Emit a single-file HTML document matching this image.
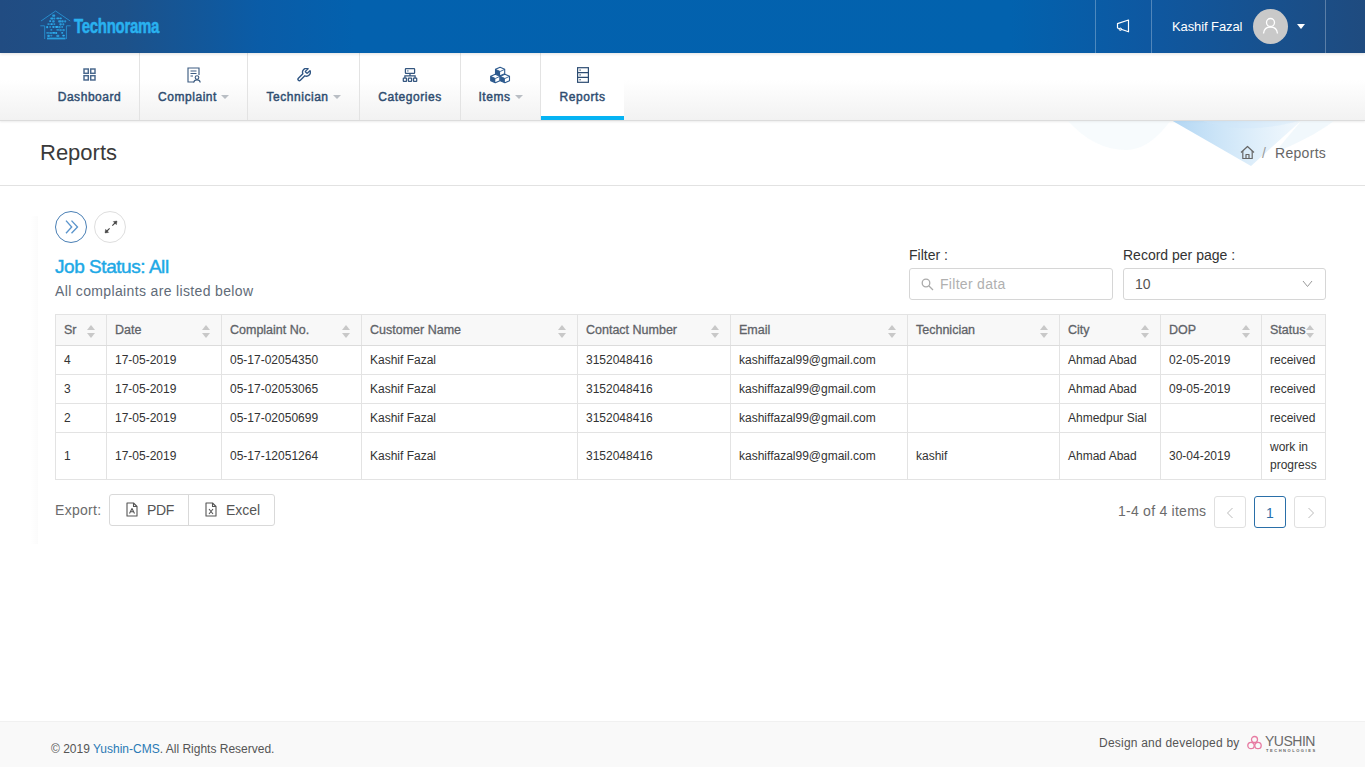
<!DOCTYPE html>
<html><head><meta charset="utf-8">
<style>
*{box-sizing:border-box;margin:0;padding:0}
html,body{width:1365px;height:767px;overflow:hidden;background:#fff;font-family:"Liberation Sans",sans-serif;color:#333}
.abs{position:absolute}
#hdr{position:absolute;left:0;top:0;width:1365px;height:53px;z-index:2;box-shadow:0 1px 3px rgba(0,0,0,.12);background:linear-gradient(90deg,#214c82 0%,#1d5189 9%,#0a5ca7 19%,#0361ae 26%,#0262ae 74%,#0e58a1 84%,#1f4b7f 100%)}
.vd{position:absolute;top:0;width:1px;height:53px;background:rgba(255,255,255,.28)}
#nav{position:absolute;left:0;top:53px;width:1365px;height:68px;background:linear-gradient(#fff 0%,#fff 40%,#f2f2f2 100%);border-bottom:1px solid #dcdcdc;box-shadow:0 1px 2px rgba(0,0,0,.08)}
.ni{position:absolute;top:0;height:67px;border-right:1px solid #e3e3e3;text-align:center}
.ni .lb{position:absolute;top:37px;left:0;right:0;font-size:12px;font-weight:normal;-webkit-text-stroke:.45px #2f4d70;color:#2f4d70;letter-spacing:.55px}
.ni svg{position:absolute}
.car{display:inline-block;width:0;height:0;border-left:4px solid transparent;border-right:4px solid transparent;border-top:4px solid #b9bec4;vertical-align:middle;margin-left:4px;margin-top:-2px}
#ptitle{position:absolute;left:0;top:121px;width:1365px;height:65px;border-bottom:1px solid #e2e2e2;overflow:hidden}
#card{position:absolute;left:30px;top:216px;width:8px;height:328px;background:linear-gradient(90deg,rgba(0,0,0,0),rgba(0,0,0,.016))}
.cbtn{position:absolute;width:32px;height:32px;border-radius:50%}
table{border-collapse:collapse;position:absolute;left:55px;top:314px;table-layout:fixed;font-size:12px}
td,th{border:1px solid #e3e3e3;padding:0 8px;text-align:left;vertical-align:middle;color:#333;font-weight:normal}
th{background:#f8f8f8;height:31px;font-size:12.5px;font-weight:normal;-webkit-text-stroke:.3px #5f6368;color:#5f6368;position:relative;border-bottom:1px solid #dcdcdc}
td{height:29px}
.srt{position:absolute;right:11px;top:10px;width:8px;height:13px}
.srt:before{content:"";position:absolute;left:0;top:0;border-left:4px solid transparent;border-right:4px solid transparent;border-bottom:5px solid #c8c8c8}
.srt:after{content:"";position:absolute;left:0;top:8px;border-left:4px solid transparent;border-right:4px solid transparent;border-top:5px solid #c8c8c8}
.inp{position:absolute;height:32px;border:1px solid #d6d6d6;border-radius:3px;background:#fff}
.pg{position:absolute;top:496px;width:32px;height:32px;border:1px solid #e0e0e0;border-radius:3px;text-align:center}
#foot{position:absolute;left:0;top:721px;width:1365px;height:46px;background:#f9f9f9;border-top:1px solid #f1f1f1}
</style></head>
<body>
<div id="hdr">
  <svg class="abs" style="left:40px;top:10px" width="31" height="31" viewBox="0 0 31 31">
    <g fill="none" stroke="#2aa3e6" stroke-width=".9" opacity=".8">
      <path d="M1 11 L15.6 1 L30.2 11"/><path d="M0.3 15.8 H4.5 M26.5 15.8 H30.6"/><path d="M4.7 15.8 V29 M26.4 15.8 V29"/>
    </g>
    <g fill="#2db4f5"><rect x="12.2" y="4.5" width="3" height="2.2" rx=".8" opacity="0.78"/><rect x="10.3" y="7.4" width="3" height="2.2" rx=".8" opacity="0.85"/><rect x="13.3" y="7.4" width="2" height="2.2" rx=".8" opacity="0.72"/><rect x="16.3" y="7.4" width="3" height="1.8" rx=".8" opacity="0.84"/><rect x="19.3" y="7.4" width="2.5" height="1.8" rx=".8" opacity="0.85"/><rect x="9.2" y="10.3" width="2" height="1.8" rx=".8" opacity="0.95"/><rect x="12.2" y="10.3" width="2.5" height="2.2" rx=".8" opacity="0.78"/><rect x="18.2" y="10.3" width="3" height="2.2" rx=".8" opacity="0.80"/><rect x="21.2" y="10.3" width="2.5" height="2.2" rx=".8" opacity="0.76"/><rect x="24.2" y="10.3" width="2" height="2.2" rx=".8" opacity="0.73"/><rect x="7.3" y="13.2" width="2.5" height="1.8" rx=".8" opacity="0.63"/><rect x="10.3" y="13.2" width="2.5" height="1.8" rx=".8" opacity="0.94"/><rect x="13.3" y="13.2" width="2" height="1.8" rx=".8" opacity="0.69"/><rect x="19.3" y="13.2" width="2.5" height="2.2" rx=".8" opacity="0.77"/><rect x="22.3" y="13.2" width="2" height="2.2" rx=".8" opacity="0.73"/><rect x="6.2" y="16.1" width="2" height="2.2" rx=".8" opacity="0.90"/><rect x="9.2" y="16.1" width="2" height="1.8" rx=".8" opacity="0.60"/><rect x="12.2" y="16.1" width="2.5" height="1.8" rx=".8" opacity="0.87"/><rect x="15.2" y="16.1" width="3" height="1.8" rx=".8" opacity="0.99"/><rect x="18.2" y="16.1" width="2.5" height="2.2" rx=".8" opacity="0.65"/><rect x="21.2" y="16.1" width="2" height="1.8" rx=".8" opacity="0.71"/><rect x="10.3" y="19.0" width="2" height="1.8" rx=".8" opacity="0.67"/><rect x="16.3" y="19.0" width="3" height="1.8" rx=".8" opacity="0.62"/><rect x="19.3" y="19.0" width="2.5" height="2.2" rx=".8" opacity="0.60"/><rect x="22.3" y="19.0" width="2.5" height="2.2" rx=".8" opacity="0.63"/><rect x="6.2" y="21.9" width="3" height="1.8" rx=".8" opacity="0.61"/><rect x="9.2" y="21.9" width="3" height="2.2" rx=".8" opacity="0.65"/><rect x="12.2" y="21.9" width="3" height="1.8" rx=".8" opacity="0.95"/><rect x="15.2" y="21.9" width="2" height="2.2" rx=".8" opacity="0.96"/><rect x="21.2" y="21.9" width="2" height="1.8" rx=".8" opacity="0.90"/><rect x="7.3" y="24.8" width="2.5" height="2.2" rx=".8" opacity="0.84"/><rect x="10.3" y="24.8" width="2" height="1.8" rx=".8" opacity="0.62"/><rect x="16.3" y="24.8" width="3" height="2.2" rx=".8" opacity="0.70"/><rect x="22.3" y="24.8" width="2.5" height="1.8" rx=".8" opacity="0.97"/><rect x="7" y="27.6" width="18.5" height="1.8" opacity=".8"/></g>
  </svg>
  <div class="abs" style="left:74px;top:15px;font-size:20px;font-weight:bold;color:#29b1ef;-webkit-text-stroke:.5px #29b1ef;transform:scaleX(.75);transform-origin:0 0;letter-spacing:-.4px">Technorama</div>
  <div class="vd" style="left:1095px"></div>
  <div class="vd" style="left:1151px"></div>
  <div class="vd" style="left:1325px"></div>
  <svg class="abs" style="left:1116px;top:19px" width="15" height="14" viewBox="0 0 15 14">
    <path d="M1.5 4.6 L12.5 1 V12.8 L1.5 9 Z" fill="none" stroke="#fff" stroke-width="1.2" stroke-linejoin="round"/><circle cx="4.4" cy="10.3" r="1.2" fill="none" stroke="#fff" stroke-width="1"/>
  </svg>
  <div class="abs" style="left:1172px;top:19px;font-size:13px;letter-spacing:-.1px;color:#fff">Kashif Fazal</div>
  <div class="abs" style="left:1253px;top:9px;width:35px;height:35px;border-radius:50%;background:#c9c9c9"></div>
  <svg class="abs" style="left:1261px;top:16px" width="19" height="19" viewBox="0 0 19 19">
    <circle cx="9.5" cy="6.5" r="4" fill="none" stroke="#fff" stroke-width="1.3"/>
    <path d="M2.5 17.5 C3 12.5 6 11 9.5 11 C13 11 16 12.5 16.5 17.5" fill="none" stroke="#fff" stroke-width="1.3"/>
  </svg>
  <div class="abs" style="left:1297px;top:24px;border-left:4.5px solid transparent;border-right:4.5px solid transparent;border-top:5px solid #fff"></div>
</div>

<div id="nav">
  <div class="ni" style="left:40px;width:100px">
    <svg style="left:43px;top:15px" width="13" height="13" viewBox="0 0 13 13"><g fill="none" stroke="#48678c" stroke-width="1.45"><rect x="1" y="1" width="4.3" height="4.3"/><rect x="7.7" y="1" width="4.3" height="4.3"/><rect x="1" y="7.7" width="4.3" height="4.3"/><rect x="7.7" y="7.7" width="4.3" height="4.3"/></g></svg>
    <div class="lb">Dashboard</div></div>
  <div class="ni" style="left:140px;width:108px">
    <svg style="left:47px;top:14px" width="14" height="16" viewBox="0 0 14 16"><g fill="none" stroke="#3e5d82" stroke-width="1.15"><path d="M7 15 H1 V1 H12 V8"/><path d="M3.5 4 H9.5 M3.5 6.5 H9.5 M3.5 9 H6"/><circle cx="10" cy="10.5" r="1.8"/><path d="M6.8 15.5 C7 13.5 8.5 12.8 10 12.8 C11.5 12.8 13 13.5 13.2 15.5"/></g></svg>
    <div class="lb">Complaint<span class="car"></span></div></div>
  <div class="ni" style="left:248px;width:112px">
    <svg style="left:49px;top:15px" width="14" height="14" viewBox="1.5 1.5 21.5 21.5"><path d="M14.7 6.3a1 1 0 0 0 0 1.4l1.6 1.6a1 1 0 0 0 1.4 0l3.77-3.77a6 6 0 0 1-7.94 7.94l-6.91 6.91a2.12 2.12 0 0 1-3-3l6.91-6.91a6 6 0 0 1 7.94-7.94l-3.76 3.76z" fill="none" stroke="#2f5583" stroke-width="2.1" stroke-linejoin="round"/></svg>
    <div class="lb">Technician<span class="car"></span></div></div>
  <div class="ni" style="left:360px;width:101px">
    <svg style="left:42px;top:14px" width="17" height="16" viewBox="0 0 17 16"><g fill="none" stroke="#34567f" stroke-width="1.25"><rect x="3.4" y="1.7" width="9.2" height="4.6" rx=".6"/><path d="M8 6.3 V8.9 M2.9 11 V8.9 H13.1 V11"/><rect x="1.3" y="11.2" width="3.2" height="3.2" rx=".4"/><rect x="6.4" y="11.2" width="3.2" height="3.2" rx=".4"/><rect x="11.5" y="11.2" width="3.2" height="3.2" rx=".4"/></g><rect x="5" y="3.5" width="1.6" height=".9" fill="#34567f"/></svg>
    <div class="lb">Categories</div></div>
  <div class="ni" style="left:461px;width:80px">
    <svg style="left:28px;top:13px" width="22" height="18" viewBox="0 0 22 18"><polygon points="11.10,1.20 15.70,3.35 15.70,7.65 11.10,9.80 6.50,7.65 6.50,3.35" fill="#fff"/><polygon points="6.50,3.35 11.10,5.50 11.10,9.80 6.50,7.65" fill="#2d5a8e"/><polygon points="11.10,1.20 15.70,3.35 15.70,7.65 11.10,9.80 6.50,7.65 6.50,3.35" fill="none" stroke="#2d5a8e" stroke-width="1.1" stroke-linejoin="round"/><polyline points="6.50,3.35 11.10,5.50 15.70,3.35" fill="none" stroke="#2d5a8e" stroke-width=".9"/><polygon points="6.30,8.20 10.90,10.35 10.90,14.65 6.30,16.80 1.70,14.65 1.70,10.35" fill="#fff"/><polygon points="1.70,10.35 6.30,12.50 6.30,16.80 1.70,14.65" fill="#2d5a8e"/><polygon points="6.30,8.20 10.90,10.35 10.90,14.65 6.30,16.80 1.70,14.65 1.70,10.35" fill="none" stroke="#2d5a8e" stroke-width="1.1" stroke-linejoin="round"/><polyline points="1.70,10.35 6.30,12.50 10.90,10.35" fill="none" stroke="#2d5a8e" stroke-width=".9"/><polygon points="15.90,8.20 20.50,10.35 20.50,14.65 15.90,16.80 11.30,14.65 11.30,10.35" fill="#fff"/><polygon points="11.30,10.35 15.90,12.50 15.90,16.80 11.30,14.65" fill="#2d5a8e"/><polygon points="15.90,8.20 20.50,10.35 20.50,14.65 15.90,16.80 11.30,14.65 11.30,10.35" fill="none" stroke="#2d5a8e" stroke-width="1.1" stroke-linejoin="round"/><polyline points="11.30,10.35 15.90,12.50 20.50,10.35" fill="none" stroke="#2d5a8e" stroke-width=".9"/></svg>
    <div class="lb">Items<span class="car"></span></div></div>
  <div class="ni" style="left:541px;width:83px;background:#fff;border-right:none">
    <svg style="left:36px;top:14px" width="12" height="16" viewBox="0 0 12 16"><g fill="none" stroke="#2c4c72" stroke-width="1.2"><rect x=".6" y=".7" width="10.8" height="14.6"/><path d="M.6 5.6 H11.4 M.6 10.4 H11.4"/></g><g fill="#5a6f88"><rect x="2.4" y="2.4" width="1.4" height="1.4"/><rect x="2.4" y="7.2" width="1.4" height="1.4"/><rect x="2.4" y="12" width="1.4" height="1.4"/></g></svg>
    <div class="lb">Reports</div>
    <div class="abs" style="left:0;bottom:0;width:83px;height:4px;background:#06b3f3"></div></div>
</div>

<div id="ptitle">
  <svg class="abs" style="left:1060px;top:-1px" width="290" height="66" viewBox="0 0 290 66">
    <defs><linearGradient id="vg" x1="0" y1="0" x2="1" y2="0"><stop offset="0" stop-color="#9dcbf0" stop-opacity=".8"/><stop offset=".5" stop-color="#b9dbf5" stop-opacity=".6"/><stop offset="1" stop-color="#dcedfa" stop-opacity=".4"/></linearGradient></defs>
    <path d="M7 0 C25 20 45 30 66 30 C85 30 100 15 111 0 Z" fill="#e4f3fa" opacity=".3"/>
    <path d="M242 0 L275 0 C260 12 235 25 215 32 Z" fill="#e4f1fa" opacity=".5"/>
    <path d="M111 0 L191 46 L242 0 Z" fill="url(#vg)"/>
    <path d="M140 0 C165 10 200 12 242 0 Z" fill="#cfe6f8" opacity=".35"/>
  </svg>
  <div class="abs" style="left:40px;top:19px;font-size:22px;color:#3a3a3a">Reports</div>
  <svg class="abs" style="left:1240px;top:24px" width="15" height="15" viewBox="0 0 15 15"><g fill="none" stroke="#666" stroke-width="1.2" stroke-linejoin="round"><path d="M1 7.5 L7.5 1.5 L14 7.5"/><path d="M2.8 6 V13.5 H12.2 V6"/><path d="M6 13.5 V9.5 H9 V13.5"/></g></svg>
  <div class="abs" style="left:1262px;top:24px;font-size:14px;color:#999">/</div>
  <div class="abs" style="left:1275px;top:24px;font-size:14px;letter-spacing:.3px;color:#666">Reports</div>
</div>

<div id="card"></div>
<div class="cbtn" style="left:55px;top:211px;border:1px solid #4a7fb5"><svg class="abs" style="left:8px;top:7px" width="16" height="16" viewBox="0 0 16 16"><path d="M2 1.6 L7.7 8 L2 14.3 M7.5 1.6 L13.5 8 L7.5 14.3" fill="none" stroke="#5b95cc" stroke-width="1.35"/></svg></div>
<div class="cbtn" style="left:94px;top:211px;border:1px solid #dedede"><svg class="abs" style="left:9px;top:8px" width="14" height="14" viewBox="0 0 14 14"><g fill="#444" stroke="#444" stroke-width="1.1"><path d="M8.3 5.6 L11.5 2.5"/><path d="M5.6 8.4 L2.5 11.5"/><path d="M13 1 L9.3 1.6 L12.4 4.7 Z" stroke-width=".4"/><path d="M1 13 L1.6 9.3 L4.7 12.4 Z" stroke-width=".4"/></g></svg></div>

<div class="abs" style="left:55px;top:256px;font-size:19px;letter-spacing:-.45px;-webkit-text-stroke:.45px #1ea9e6;color:#1ea9e6">Job Status: All</div>
<div class="abs" style="left:55px;top:283px;font-size:14px;letter-spacing:.35px;color:#616b78">All complaints are listed below</div>

<div class="abs" style="left:909px;top:247px;font-size:14px;color:#333">Filter :</div>
<div class="inp" style="left:909px;top:268px;width:204px">
  <svg class="abs" style="left:11px;top:9px" width="13" height="13" viewBox="0 0 13 13"><g fill="none" stroke="#aaa" stroke-width="1.3"><circle cx="5" cy="5" r="3.8"/><path d="M8 8 L12 12"/></g></svg>
  <div class="abs" style="left:30px;top:7px;font-size:14px;letter-spacing:.3px;color:#b0b0b0">Filter data</div>
</div>
<div class="abs" style="left:1123px;top:247px;font-size:14px;color:#333">Record per page :</div>
<div class="inp" style="left:1123px;top:268px;width:203px">
  <div class="abs" style="left:11px;top:7px;font-size:14px;color:#555">10</div>
  <svg class="abs" style="left:178px;top:11px" width="11" height="8" viewBox="0 0 11 8"><path d="M1 1 L5.5 6.5 L10 1" fill="none" stroke="#999" stroke-width="1"/></svg>
</div>

<table>
<colgroup><col style="width:51px"><col style="width:115px"><col style="width:140px"><col style="width:216px"><col style="width:153px"><col style="width:177px"><col style="width:152px"><col style="width:101px"><col style="width:101px"><col style="width:64px"></colgroup>
<tr><th>Sr<span class="srt"></span></th><th>Date<span class="srt"></span></th><th>Complaint No.<span class="srt"></span></th><th>Customer Name<span class="srt"></span></th><th>Contact Number<span class="srt"></span></th><th>Email<span class="srt"></span></th><th>Technician<span class="srt"></span></th><th>City<span class="srt"></span></th><th>DOP<span class="srt"></span></th><th>Status<span class="srt" style="right:11px"></span></th></tr>
<tr><td>4</td><td>17-05-2019</td><td>05-17-02054350</td><td>Kashif Fazal</td><td>3152048416</td><td>kashiffazal99@gmail.com</td><td></td><td>Ahmad Abad</td><td>02-05-2019</td><td>received</td></tr>
<tr><td>3</td><td>17-05-2019</td><td>05-17-02053065</td><td>Kashif Fazal</td><td>3152048416</td><td>kashiffazal99@gmail.com</td><td></td><td>Ahmad Abad</td><td>09-05-2019</td><td>received</td></tr>
<tr><td>2</td><td>17-05-2019</td><td>05-17-02050699</td><td>Kashif Fazal</td><td>3152048416</td><td>kashiffazal99@gmail.com</td><td></td><td>Ahmedpur Sial</td><td></td><td>received</td></tr>
<tr><td style="height:47px">1</td><td>17-05-2019</td><td>05-17-12051264</td><td>Kashif Fazal</td><td>3152048416</td><td>kashiffazal99@gmail.com</td><td>kashif</td><td>Ahmad Abad</td><td>30-04-2019</td><td style="line-height:18px">work in progress</td></tr>
</table>

<div class="abs" style="left:55px;top:502px;font-size:14px;letter-spacing:.3px;color:#6b6b6b">Export:</div>
<div class="abs" style="left:109px;top:494px;width:166px;height:32px;border:1px solid #d9d9d9;border-radius:3px">
  <div class="abs" style="left:78px;top:0;width:1px;height:30px;background:#d9d9d9"></div>
  <svg class="abs" style="left:16px;top:7px" width="12" height="15" viewBox="0 0 12 15"><g fill="none" stroke="#555" stroke-width="1.1" stroke-linejoin="round"><path d="M1 1 H7.5 L11 4.5 V14 H1 Z"/><path d="M7.5 1 V4.5 H11"/><path d="M3.5 11.5 L6 6.5 L8.5 11.5 M4.5 9.8 H7.5"/></g></svg>
  <div class="abs" style="left:37px;top:7px;font-size:14px;letter-spacing:-.4px;color:#555">PDF</div>
  <svg class="abs" style="left:95px;top:7px" width="12" height="15" viewBox="0 0 12 15"><g fill="none" stroke="#555" stroke-width="1.1" stroke-linejoin="round"><path d="M1 1 H7.5 L11 4.5 V14 H1 Z"/><path d="M7.5 1 V4.5 H11"/><path d="M4 7 L8 12 M8 7 L4 12"/></g></svg>
  <div class="abs" style="left:116px;top:7px;font-size:14px;color:#555">Excel</div>
</div>

<div class="abs" style="left:1118px;top:503px;font-size:14px;letter-spacing:.25px;color:#6b6b6b">1-4 of 4 items</div>
<div class="pg" style="left:1214px"><svg class="abs" style="left:11px;top:10px" width="8" height="12" viewBox="0 0 8 12"><path d="M6.5 1 L1.5 6 L6.5 11" fill="none" stroke="#bbb" stroke-width="1"/></svg></div>
<div class="pg" style="left:1254px;border-color:#2a6fa8"><div class="abs" style="left:0;right:0;top:8px;font-size:14px;color:#2a6fa8">1</div></div>
<div class="pg" style="left:1294px"><svg class="abs" style="left:12px;top:10px" width="8" height="12" viewBox="0 0 8 12"><path d="M1.5 1 L6.5 6 L1.5 11" fill="none" stroke="#bbb" stroke-width="1"/></svg></div>

<div id="foot">
  <div class="abs" style="left:51px;top:20px;font-size:12px;color:#555">© 2019 <span style="color:#2a7ab5">Yushin-CMS</span>. All Rights Reserved.</div>
  <div class="abs" style="left:1099px;top:14px;font-size:12px;letter-spacing:.22px;color:#555">Design and developed by</div>
  <svg class="abs" style="left:1246px;top:13px" width="17" height="16" viewBox="0 0 17 16"><g fill="none" stroke="#e77ba2" stroke-width="1.3"><circle cx="8.5" cy="4.5" r="3"/><circle cx="5" cy="10.5" r="3.2"/><circle cx="12" cy="10.5" r="3.2"/></g></svg>
  <div class="abs" style="left:1265px;top:11px;font-size:14px;color:#6a6a6a;letter-spacing:-.5px">YUSHIN</div>
  <div class="abs" style="left:1266px;top:26px;font-size:4px;font-weight:bold;color:#666;letter-spacing:1.55px">TECHNOLOGIES</div>
</div>
</body></html>
